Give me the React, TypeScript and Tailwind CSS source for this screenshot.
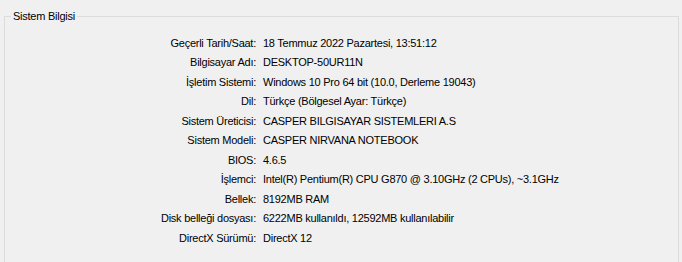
const rows: [string, string][] = [
  ["Geçerli Tarih/Saat:", "18 Temmuz 2022 Pazartesi, 13:51:12"],
  ["Bilgisayar Adı:", "DESKTOP-50UR11N"],
  ["İşletim Sistemi:", "Windows 10 Pro 64 bit (10.0, Derleme 19043)"],
  ["Dil:", "Türkçe (Bölgesel Ayar: Türkçe)"],
  ["Sistem Üreticisi:", "CASPER BILGISAYAR SISTEMLERI A.S"],
  ["Sistem Modeli:", "CASPER NIRVANA NOTEBOOK"],
  ["BIOS:", "4.6.5"],
  ["İşlemci:", "Intel(R) Pentium(R) CPU G870 @ 3.10GHz (2 CPUs), ~3.1GHz"],
  ["Bellek:", "8192MB RAM"],
  ["Disk belleği dosyası:", "6222MB kullanıldı, 12592MB kullanılabilir"],
  ["DirectX Sürümü:", "DirectX 12"],
];

export default function App() {
  return (
    <div className="w-[682px] h-[262px] overflow-hidden bg-[#f0f0f0] text-black font-['Liberation_Sans',Arial,sans-serif] text-[11px] tracking-[-0.25px]">
      <fieldset className="ml-[4px] mr-[3px] mt-[9px] h-[300px] border border-[#dcdcdc] px-0 pt-[10px]">
        <legend className="ml-[6px] px-[2px] leading-[14px]">Sistem Bilgisi</legend>
        <div className="grid grid-cols-[251px_1fr] gap-x-[7px] auto-rows-[19.5px] items-center">
          {rows.map(([label, value]) => (
            <div key={label} className="contents">
              <div className="text-right whitespace-nowrap">{label}</div>
              <div className="whitespace-nowrap">{value}</div>
            </div>
          ))}
        </div>
      </fieldset>
    </div>
  );
}
